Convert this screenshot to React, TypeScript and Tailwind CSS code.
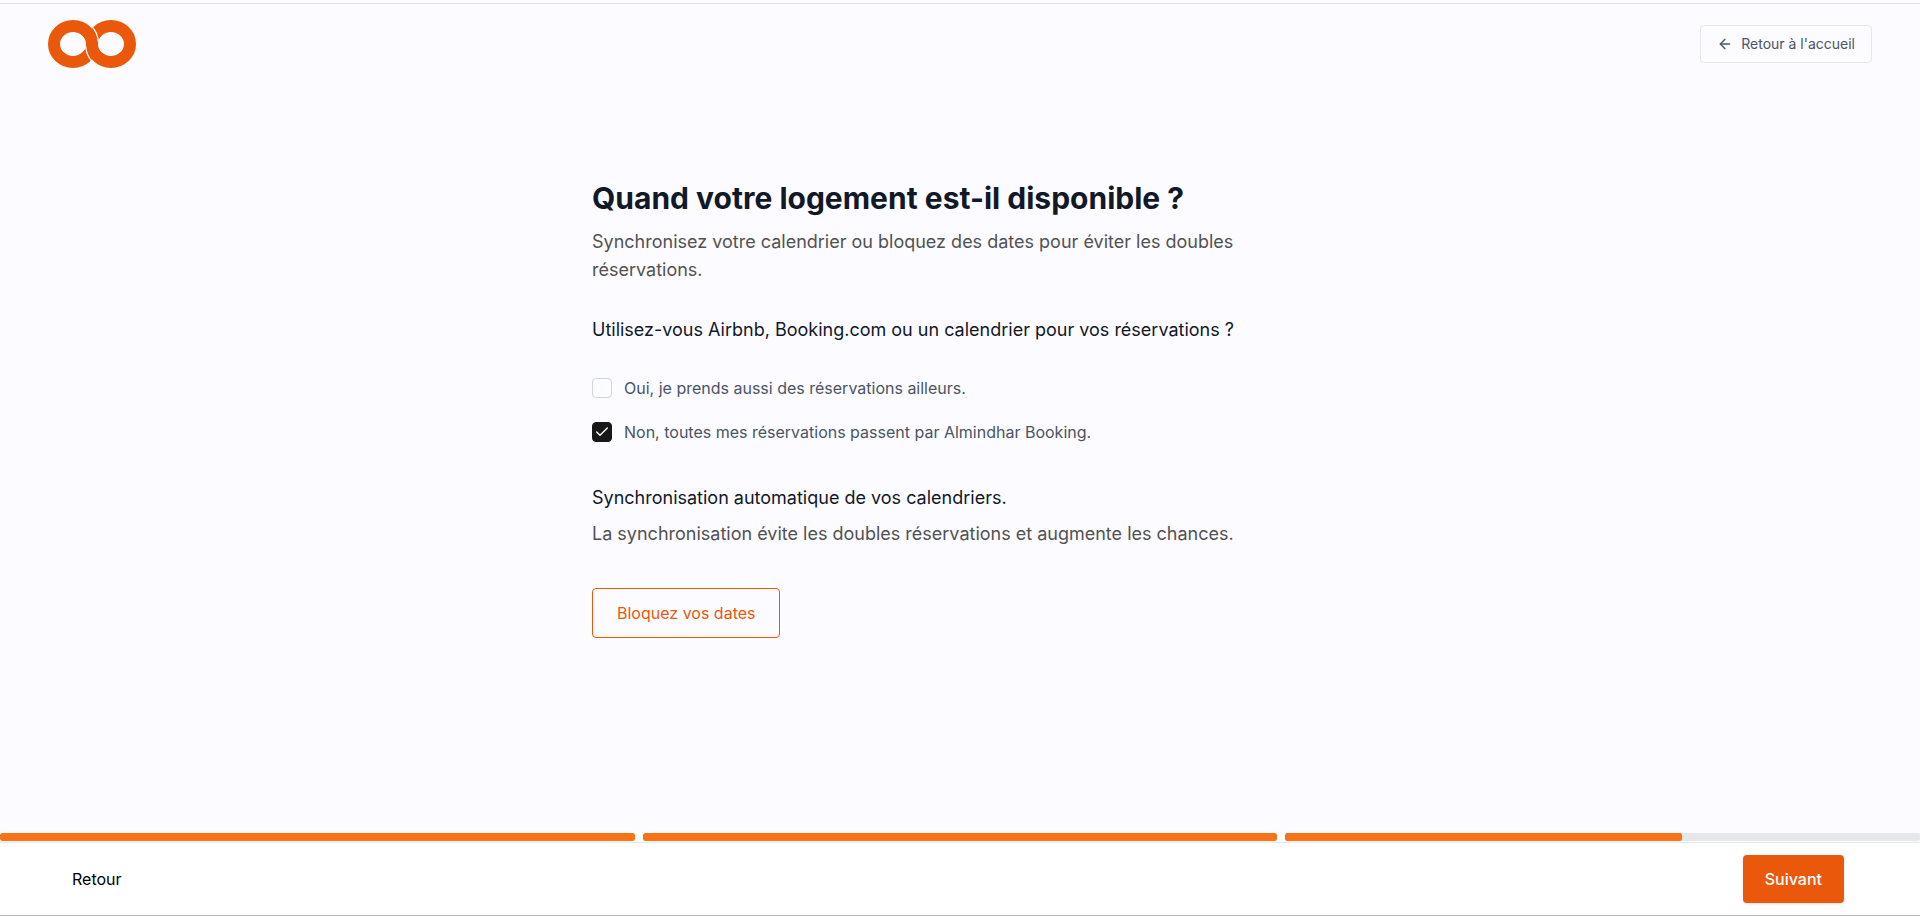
import { useState } from "react";
import { ArrowLeft, Check } from "lucide-react";

type Choice = "external" | "internal";

const CHOICES: { id: Choice; label: string }[] = [
  { id: "external", label: "Oui, je prends aussi des réservations ailleurs." },
  {
    id: "internal",
    label: "Non, toutes mes réservations passent par Almindhar Booking.",
  },
];

// Completion of each step group, in percent.
const STEPS = [100, 100, 62.5];

// Two interlocked rings; the thin cuts show where one band passes over.
function Logo() {
  return (
    <svg viewBox="0 0 88 48" className="h-12 w-22" aria-hidden="true">
      <g fill="none" stroke="#ea580c" strokeWidth="12">
        <ellipse cx="63" cy="24" rx="19" ry="18" />
        <ellipse cx="25" cy="24" rx="19" ry="18" />
      </g>
      <g fill="none" stroke="#fcfbff" strokeWidth="1.3">
        <path d="M37.6 26C38 32 40 37 44 41.4" />
        <path d="M50.4 22C50 16 48 11 44 6.6" />
      </g>
    </svg>
  );
}

function ProgressBar() {
  return (
    <div className="flex gap-2">
      {STEPS.map((value, i) => (
        <div
          key={i}
          className={
            value === 100
              ? "h-2 flex-1 overflow-hidden rounded-xs"
              : "h-2 flex-1 overflow-hidden rounded-xs bg-gray-200"
          }
        >
          <div
            className="h-full rounded-xs bg-[#f97316]"
            style={{ width: `${value}%` }}
          />
        </div>
      ))}
    </div>
  );
}

export default function App() {
  const [choice, setChoice] = useState<Choice>("internal");

  return (
    <div className="flex min-h-screen flex-col bg-[#fcfbff] font-['Inter',sans-serif]">
      <header className="mt-[3px] flex items-center justify-between border-t border-[#e0e0e0] px-12 py-4">
        <a href="#" aria-label="Almindhar Booking">
          <Logo />
        </a>
        <button
          type="button"
          className="flex items-center gap-2 rounded-sm border border-gray-200 px-4 py-2 text-sm text-gray-600"
        >
          <ArrowLeft className="size-4" strokeWidth={2} />
          Retour à l'accueil
        </button>
      </header>

      <main className="mx-auto w-full max-w-3xl flex-1 px-4 pt-24">
        <h1 className="text-3xl font-bold text-[#111827]">
          Quand votre logement est-il disponible ?
        </h1>
        <p className="mt-3 text-lg leading-7 text-neutral-600">
          Synchronisez votre calendrier ou bloquez des dates pour éviter les
          doubles réservations.
        </p>

        <fieldset className="mt-8">
          <legend className="text-lg text-[#111827]">
            Utilisez-vous Airbnb, Booking.com ou un calendrier pour vos
            réservations ?
          </legend>
          <div className="mt-8 flex flex-col gap-5">
            {CHOICES.map(({ id, label }) => (
              <label
                key={id}
                className="flex items-center gap-3 text-[#4b5563]"
              >
                <span className="grid size-5">
                  <input
                    type="checkbox"
                    checked={choice === id}
                    onChange={() => setChoice(id)}
                    className="col-start-1 row-start-1 size-5 appearance-none rounded-sm border border-gray-300 checked:border-neutral-900 checked:bg-neutral-900"
                  />
                  {choice === id && (
                    <Check className="pointer-events-none col-start-1 row-start-1 size-4 place-self-center text-white" />
                  )}
                </span>
                {label}
              </label>
            ))}
          </div>
        </fieldset>

        <h2 className="mt-10 text-lg text-[#111827]">
          Synchronisation automatique de vos calendriers.
        </h2>
        <p className="mt-2 text-lg text-neutral-600">
          La synchronisation évite les doubles réservations et augmente les
          chances.
        </p>
        <button
          type="button"
          className="mt-10 rounded-sm border border-[#ea580c] px-6 py-3 text-[#ea580c]"
        >
          Bloquez vos dates
        </button>
      </main>

      <footer>
        <ProgressBar />
        <div className="mt-px mb-px flex items-center justify-between border-t border-b border-t-gray-200 border-b-[#b8b8b8] bg-white py-3 pr-19 pl-18">
          <button type="button" className="text-black">
            Retour
          </button>
          <button
            type="button"
            className="rounded-sm bg-[#ea580c] px-[22px] py-3 font-medium text-white shadow-sm"
          >
            Suivant
          </button>
        </div>
      </footer>
    </div>
  );
}
